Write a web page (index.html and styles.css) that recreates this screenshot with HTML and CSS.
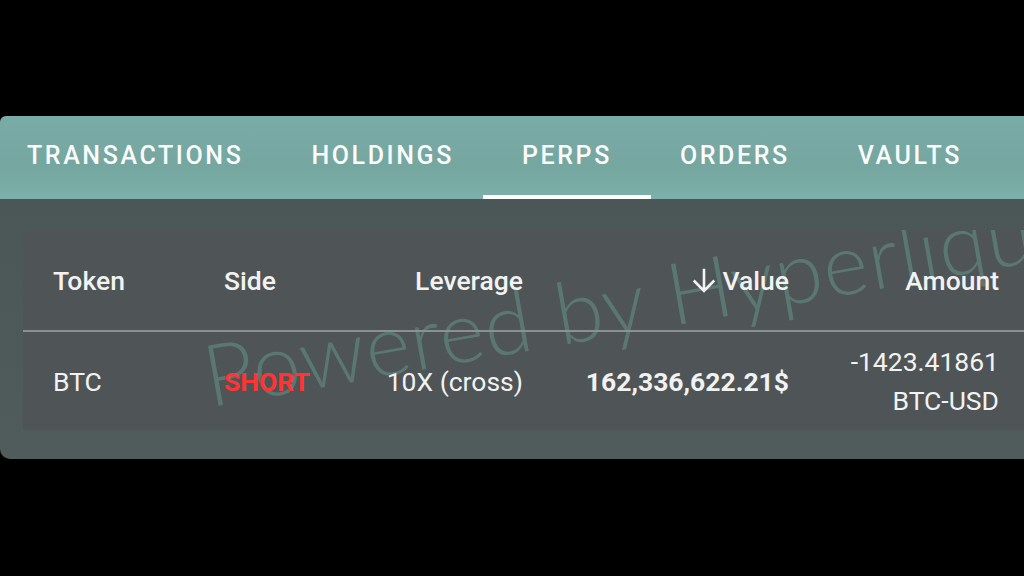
FILE: index.html
```html
<!DOCTYPE html>
<html lang="en">
<head>
    <meta charset="UTF-8">
    <title>Perps</title>
    <link rel="stylesheet" href="styles.css">
</head>
<body>
<div id="screen">
    <div class="tabs">
        <div class="tab">TRANSACTIONS</div>
        <div class="tab">HOLDINGS</div>
        <div class="tab active">PERPS</div>
        <div class="tab">ORDERS</div>
        <div class="tab">VAULTS</div>
    </div>
    <div class="panel">
        <div class="card">
            <div class="watermark">Powered by Hyperliquid</div>
            <div class="row head">
                <div class="cell">Token</div>
                <div class="cell">Side</div>
                <div class="cell right">Leverage</div>
                <div class="cell right sort">
                    <svg width="26" height="26" viewBox="0 0 24 24"><path d="M12 1.5v20M2.5 12.5l9.5 9.5 9.5-9.5" fill="none" stroke="#f2f2f2" stroke-width="2.4"/></svg>
                    <span>Value</span>
                </div>
                <div class="cell right">Amount</div>
            </div>
            <div class="row body">
                <div class="cell">BTC</div>
                <div class="cell short">SHORT</div>
                <div class="cell right">10X (cross)</div>
                <div class="cell right value">162,336,622.21$</div>
                <div class="cell right amount">-1423.41861<br>BTC-USD</div>
            </div>
        </div>
    </div>
</div>
</body>
</html>
```

FILE: styles.css
```css
* {
    margin: 0;
    padding: 0;
    box-sizing: border-box;
}

body {
    background: #000;
    font-family: Roboto, "Liberation Sans", sans-serif;
    color: #f2f2f2;
    width: 1024px;
    height: 576px;
    overflow: hidden;
}

#screen {
    padding-top: 116px;
}

.tabs {
    display: flex;
    height: 83px;
    padding-bottom: 4px;
    background: linear-gradient(180deg, #7aaca7 0%, #75a6a0 60%, #7db0aa 100%);
    border-top-left-radius: 6px;
}

.tab {
    position: relative;
    display: flex;
    align-items: center;
    justify-content: center;
    padding: 0 34px;
    font-size: 25px;
    font-weight: 500;
    letter-spacing: 2.6px;
    color: #fbfbfb;
}

.tab:first-child {
    padding-left: 27px;
}

.tab.active::after {
    content: "";
    position: absolute;
    left: -5px;
    right: -5px;
    bottom: -4px;
    height: 4px;
    background: #fff;
}

.panel {
    background: linear-gradient(180deg, #4b5656 0%, #505c5b 100%);
    padding: 31px 0 29px 23px;
    border-bottom-left-radius: 10px;
}

.card {
    position: relative;
    overflow: hidden;
    background: #4f5456;
    margin-right: -40px;
}

.row {
    display: grid;
    grid-template-columns: 171px 150px 149px 266px 210px;
    padding-left: 30px;
    align-items: center;
    position: relative;
    font-size: 26.5px;
}

.row.head {
    height: 102px;
    border-bottom: 2px solid #8b9091;
    font-weight: 500;
}

.row.body {
    height: 98px;
}

.cell.right {
    text-align: right;
}

.sort {
    display: flex;
    justify-content: flex-end;
    align-items: center;
    gap: 6px;
}

.short {
    color: #ff3535;
    font-weight: 700;
}

.value {
    font-weight: 700;
}

.amount {
    line-height: 39px;
}

.watermark {
    position: absolute;
    left: 190px;
    top: 92px;
    font-family: Lato, "Open Sans", sans-serif;
    font-weight: 300;
    font-size: 86px;
    color: rgba(110, 172, 158, 0.4);
    white-space: nowrap;
    transform: rotate(-10deg);
    transform-origin: left bottom;
    letter-spacing: 1px;
}
```
